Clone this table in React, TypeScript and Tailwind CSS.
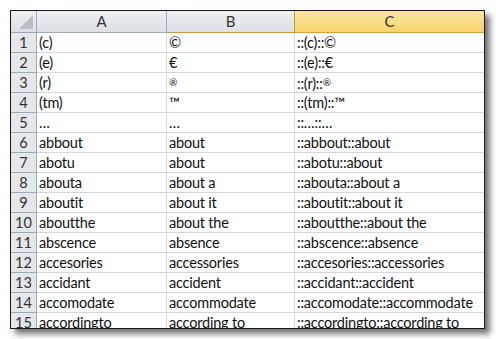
const rows: [string, string, string][] = [
  ['(c)', '©', '::(c)::©'],
  ['(e)', '€', '::(e)::€'],
  ['(r)', '®', '::(r)::®'],
  ['(tm)', '™', '::(tm)::™'],
  ['…', '…', '::…::…'],
  ['abbout', 'about', '::abbout::about'],
  ['abotu', 'about', '::abotu::about'],
  ['abouta', 'about a', '::abouta::about a'],
  ['aboutit', 'about it', '::aboutit::about it'],
  ['aboutthe', 'about the', '::aboutthe::about the'],
  ['abscence', 'absence', '::abscence::absence'],
  ['accesories', 'accessories', '::accesories::accessories'],
  ['accidant', 'accident', '::accidant::accident'],
  ['accomodate', 'accommodate', '::accomodate::accommodate'],
  ['accordingto', 'according to', '::accordingto::according to'],
];

// Calibri draws ® small and raised; mimic that with a smaller glyph
const Cell = ({ text }: { text: string }) => {
  if (!text.includes('®')) return <>{text}</>;
  const [pre] = text.split('®');
  return (
    <>
      {pre}
      <span className="text-[10px] align-[3px]">®</span>
    </>
  );
};

export default function App() {
  return (
    <div className="w-[496px] h-[339px] bg-white pl-[10px] pt-[10px] font-['Lato',sans-serif]">
      <div className="w-[475px] h-[319px] border border-[#1a1a1a] overflow-hidden shadow-[5px_5px_6px_rgba(0,0,0,0.55)] bg-white">
        {/* column headers */}
        <div className="flex h-[22px] text-[15px] text-[#333]">
          <div className="w-[26px] shrink-0 border-r border-b border-[#9eaab8] bg-gradient-to-b from-[#eef0f3] to-[#dcdfe4] relative">
            <div className="absolute right-[3px] bottom-[3px] w-0 h-0 border-l-[14px] border-l-transparent border-b-[14px] border-b-[#b9bec5]" />
          </div>
          <div className="w-[130px] shrink-0 border-r border-b border-[#9eaab8] bg-gradient-to-b from-[#eef0f3] to-[#dcdfe4] flex items-center justify-center">A</div>
          <div className="w-[128px] shrink-0 border-r border-b border-[#c99a3e] bg-gradient-to-b from-[#eef0f3] to-[#dcdfe4] flex items-center justify-center">B</div>
          <div className="flex-1 border-b border-[#d9a23b] bg-gradient-to-b from-[#fbe7a0] to-[#f8d46c] flex items-center justify-center">C</div>
        </div>
        {rows.map((r, i) => (
          <div key={i} className="flex h-[20px] text-[14.5px] text-[#111] leading-[19px] tracking-[-0.2px]">
            <div className="w-[26px] shrink-0 border-r border-b border-[#9eaab8] bg-[#e4e7eb] text-[#333] flex items-center justify-center tracking-normal">{i + 1}</div>
            <div className="w-[130px] shrink-0 border-r border-b border-[#d4d8de] px-[2px] whitespace-nowrap overflow-hidden"><Cell text={r[0]} /></div>
            <div className="w-[128px] shrink-0 border-r border-b border-[#d4d8de] px-[2px] whitespace-nowrap overflow-hidden"><Cell text={r[1]} /></div>
            <div className="flex-1 border-b border-[#d4d8de] px-[2px] whitespace-nowrap overflow-hidden"><Cell text={r[2]} /></div>
          </div>
        ))}
      </div>
    </div>
  );
}
